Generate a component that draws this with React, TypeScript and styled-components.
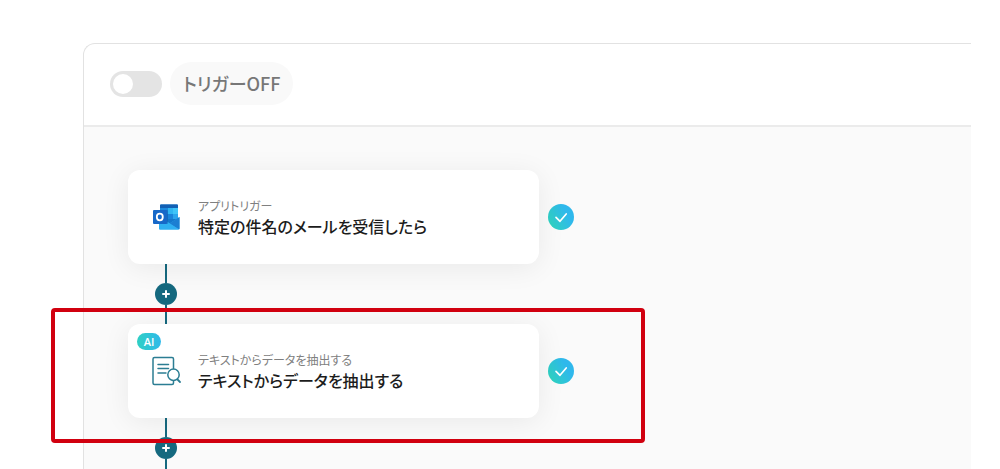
import React from "react";
import styled, { createGlobalStyle } from "styled-components";

const GlobalStyle = createGlobalStyle`
  *, *::before, *::after { box-sizing: border-box; }
  body {
    margin: 0;
    background: #ffffff;
    color: #1c1c1c;
    font-family: "Noto Sans CJK JP", "Noto Sans", sans-serif;
    font-feature-settings: "palt";
  }
`;

const Page = styled.main`
  height: 100vh;
  overflow: hidden;
  padding: 43px 29px 0 83px;
  display: flex;
`;

const Panel = styled.section`
  flex: 1;
  min-width: 0;
  display: flex;
  flex-direction: column;
  border: solid #e2e2e2;
  border-width: 1px 0 0 1px;
  border-radius: 12px 0 0 0;
`;

const Toolbar = styled.header`
  display: flex;
  align-items: center;
  gap: 8px;
  padding: 18px 26px 20px;
  border-bottom: 2px solid #ebebeb;
`;

const Toggle = styled.input`
  appearance: none;
  display: flex;
  align-items: center;
  width: 52px;
  height: 26px;
  margin: 0;
  padding: 3px;
  border-radius: 13px;
  background: #e4e4e4;
  cursor: pointer;

  &::before {
    content: "";
    width: 20px;
    height: 20px;
    border-radius: 50%;
    background: #ffffff;
  }

  &:checked {
    justify-content: flex-end;
    background: #2bc4d8;
  }
`;

const TriggerLabel = styled.label`
  padding: 0 13px;
  border-radius: 22px;
  background: #f9f9f9;
  color: #777777;
  font-size: 18px;
  font-weight: 500;
  line-height: 43px;
`;

const Canvas = styled.div`
  flex: 1;
  padding: 43px 44px 0;
  background: #fafafa;
`;

const Steps = styled.ol`
  margin: 0;
  padding: 0;
  list-style: none;
`;

const Step = styled.li`
  position: relative;
`;

const StepRow = styled.div`
  position: relative;
  display: flex;
  align-items: center;
  gap: 9px;
`;

const Card = styled.article`
  position: relative;
  flex: 0 1 411px;
  height: 94px;
  display: flex;
  align-items: center;
  gap: 16px;
  padding: 0 24px;
  border-radius: 12px;
  background: #ffffff;
  box-shadow: 0 4px 28px rgba(0, 0, 0, 0.07);
`;

const IconSlot = styled.div`
  flex: none;
  width: 30px;
  height: 30px;

  svg { display: block; }
`;

const CardText = styled.div`
  padding-bottom: 2px;
`;

const Kind = styled.p`
  margin: 0;
  color: #808080;
  font-size: 12px;
  line-height: 20px;
`;

const Title = styled.h2`
  margin: 0;
  font-size: 16px;
  font-weight: 500;
  line-height: 20px;
`;

const AiBadge = styled.span`
  position: absolute;
  top: 9px;
  left: 9px;
  width: 24px;
  border-radius: 9px;
  background: linear-gradient(90deg, #2fd0c4, #2fb9ea);
  color: #ffffff;
  font-family: "Open Sans", sans-serif;
  font-size: 11px;
  font-weight: 600;
  line-height: 17px;
  text-align: center;
`;

const Status = styled.span`
  flex: none;
  display: grid;
  place-items: center;
  width: 26px;
  height: 26px;
  border-radius: 50%;
  background: linear-gradient(60deg, #2fd8b8 0%, #2fb8ec 70%);
`;

const Connector = styled.div`
  display: flex;
  flex-direction: column;
  align-items: center;
  width: 76px;
  height: 60px;
`;

const Line = styled.span`
  flex: 1;
  width: 2px;
  background: #15697f;
`;

const AddButton = styled.button`
  display: grid;
  place-items: center;
  width: 22px;
  height: 22px;
  padding: 0;
  border: 0;
  border-radius: 50%;
  background: #15697f;
  cursor: pointer;
`;

const Highlight = styled.div`
  position: absolute;
  z-index: 1;
  top: -16px;
  left: -77px;
  width: 594px;
  height: 135px;
  border: 4px solid #d1000f;
  border-radius: 4px;
  pointer-events: none;
`;

const OutlookIcon = () => (
  <svg width="30" height="30" viewBox="0 0 30 30" aria-hidden="true">
    <rect x="8" y="2.500" width="18" height="20" rx="1" fill="#1478cc" />
    <path d="M9 2.500h16a1 1 0 0 1 1 1V6H8V3.500a1 1 0 0 1 1-1z" fill="#1260b4" />
    <rect x="8" y="6" width="8" height="6" fill="#1c8ade" />
    <rect x="16" y="6" width="5" height="6" fill="#2fb5f2" />
    <rect x="21" y="6" width="5" height="6" fill="#3fc4f8" />
    <rect x="16" y="12" width="5" height="5" fill="#1a83da" />
    <rect x="21" y="12" width="5" height="5" fill="#2ba4ec" />
    <path d="M7 15.500 17.500 21.500 27.500 15v11.500a1 1 0 0 1-1 1H8a1 1 0 0 1-1-1z" fill="#2fa9ee" />
    <path d="M27.500 15v11.500a1 1 0 0 1-.4.8L15.500 20.500l2 1z" fill="#1c7fd2" />
    <path d="M15 19.500 27 27.400a1 1 0 0 1-.5.1H8a1 1 0 0 1-1-1V20z" fill="#2fb0f2" />
    <path d="M8 8h7a1 1 0 0 1 1 1v12a1 1 0 0 1-1 1H8z" fill="#0f5ba8" opacity=".5" />
    <rect x="1" y="8" width="14" height="14" rx="1" fill="#1668c8" />
    <ellipse cx="7.800" cy="15" rx="3" ry="3.300" fill="none" stroke="#fff" strokeWidth="1.800" />
  </svg>
);

const ExtractIcon = () => (
  <svg width="30" height="30" viewBox="0 0 30 30" fill="none" stroke="#2b7d93" strokeWidth="1.500" strokeLinecap="round" strokeLinejoin="round" aria-hidden="true">
    <path d="M21.500 12.500V3a1.500 1.500 0 0 0-1.500-1.500H2.500A1.500 1.500 0 0 0 1 3v24a1.500 1.500 0 0 0 1.500 1.500H20a1.500 1.500 0 0 0 1.500-1.500v-2" />
    <path d="M6 8.500h10.500M6 12.500h10.500M6 17h8" />
    <circle cx="21.500" cy="18.800" r="5.700" />
    <path d="m25.500 23.500 2.500 2.500" strokeWidth="1.800" />
  </svg>
);

const CheckIcon = () => (
  <svg width="14" height="12" viewBox="0 0 14 12" fill="none" stroke="#fff" strokeWidth="1.700" strokeLinecap="round" strokeLinejoin="round" aria-hidden="true">
    <path d="m2 6.300 4 4 6.200-7.300" />
  </svg>
);

const PlusIcon = () => (
  <svg width="8" height="8" viewBox="0 0 8 8" stroke="#fff" strokeWidth="2" strokeLinecap="round" aria-hidden="true">
    <path d="M4 1v6M1 4h6" />
  </svg>
);

interface StepData {
  kind: string;
  title: string;
  icon: React.ReactNode;
  ai?: boolean;
  highlighted?: boolean;
}

const steps: StepData[] = [
  { kind: "アプリトリガー", title: "特定の件名のメールを受信したら", icon: <OutlookIcon /> },
  {
    kind: "テキストからデータを抽出する",
    title: "テキストからデータを抽出する",
    icon: <ExtractIcon />,
    ai: true,
    highlighted: true,
  },
];

export default function App() {
  return (
    <>
      <GlobalStyle />
      <Page>
        <Panel>
          <Toolbar>
            <Toggle type="checkbox" role="switch" id="trigger" />
            <TriggerLabel htmlFor="trigger">トリガーOFF</TriggerLabel>
          </Toolbar>
          <Canvas>
            <Steps>
              {steps.map((step) => (
                <Step key={step.title}>
                  <StepRow>
                    <Card>
                      {step.ai && <AiBadge>AI</AiBadge>}
                      <IconSlot>{step.icon}</IconSlot>
                      <CardText>
                        <Kind>{step.kind}</Kind>
                        <Title>{step.title}</Title>
                      </CardText>
                    </Card>
                    <Status role="img" aria-label="設定済み">
                      <CheckIcon />
                    </Status>
                  </StepRow>
                  <Connector>
                    <Line />
                    <AddButton type="button" aria-label="ステップを追加">
                      <PlusIcon />
                    </AddButton>
                    <Line />
                  </Connector>
                  {step.highlighted && <Highlight />}
                </Step>
              ))}
            </Steps>
          </Canvas>
        </Panel>
      </Page>
    </>
  );
}
